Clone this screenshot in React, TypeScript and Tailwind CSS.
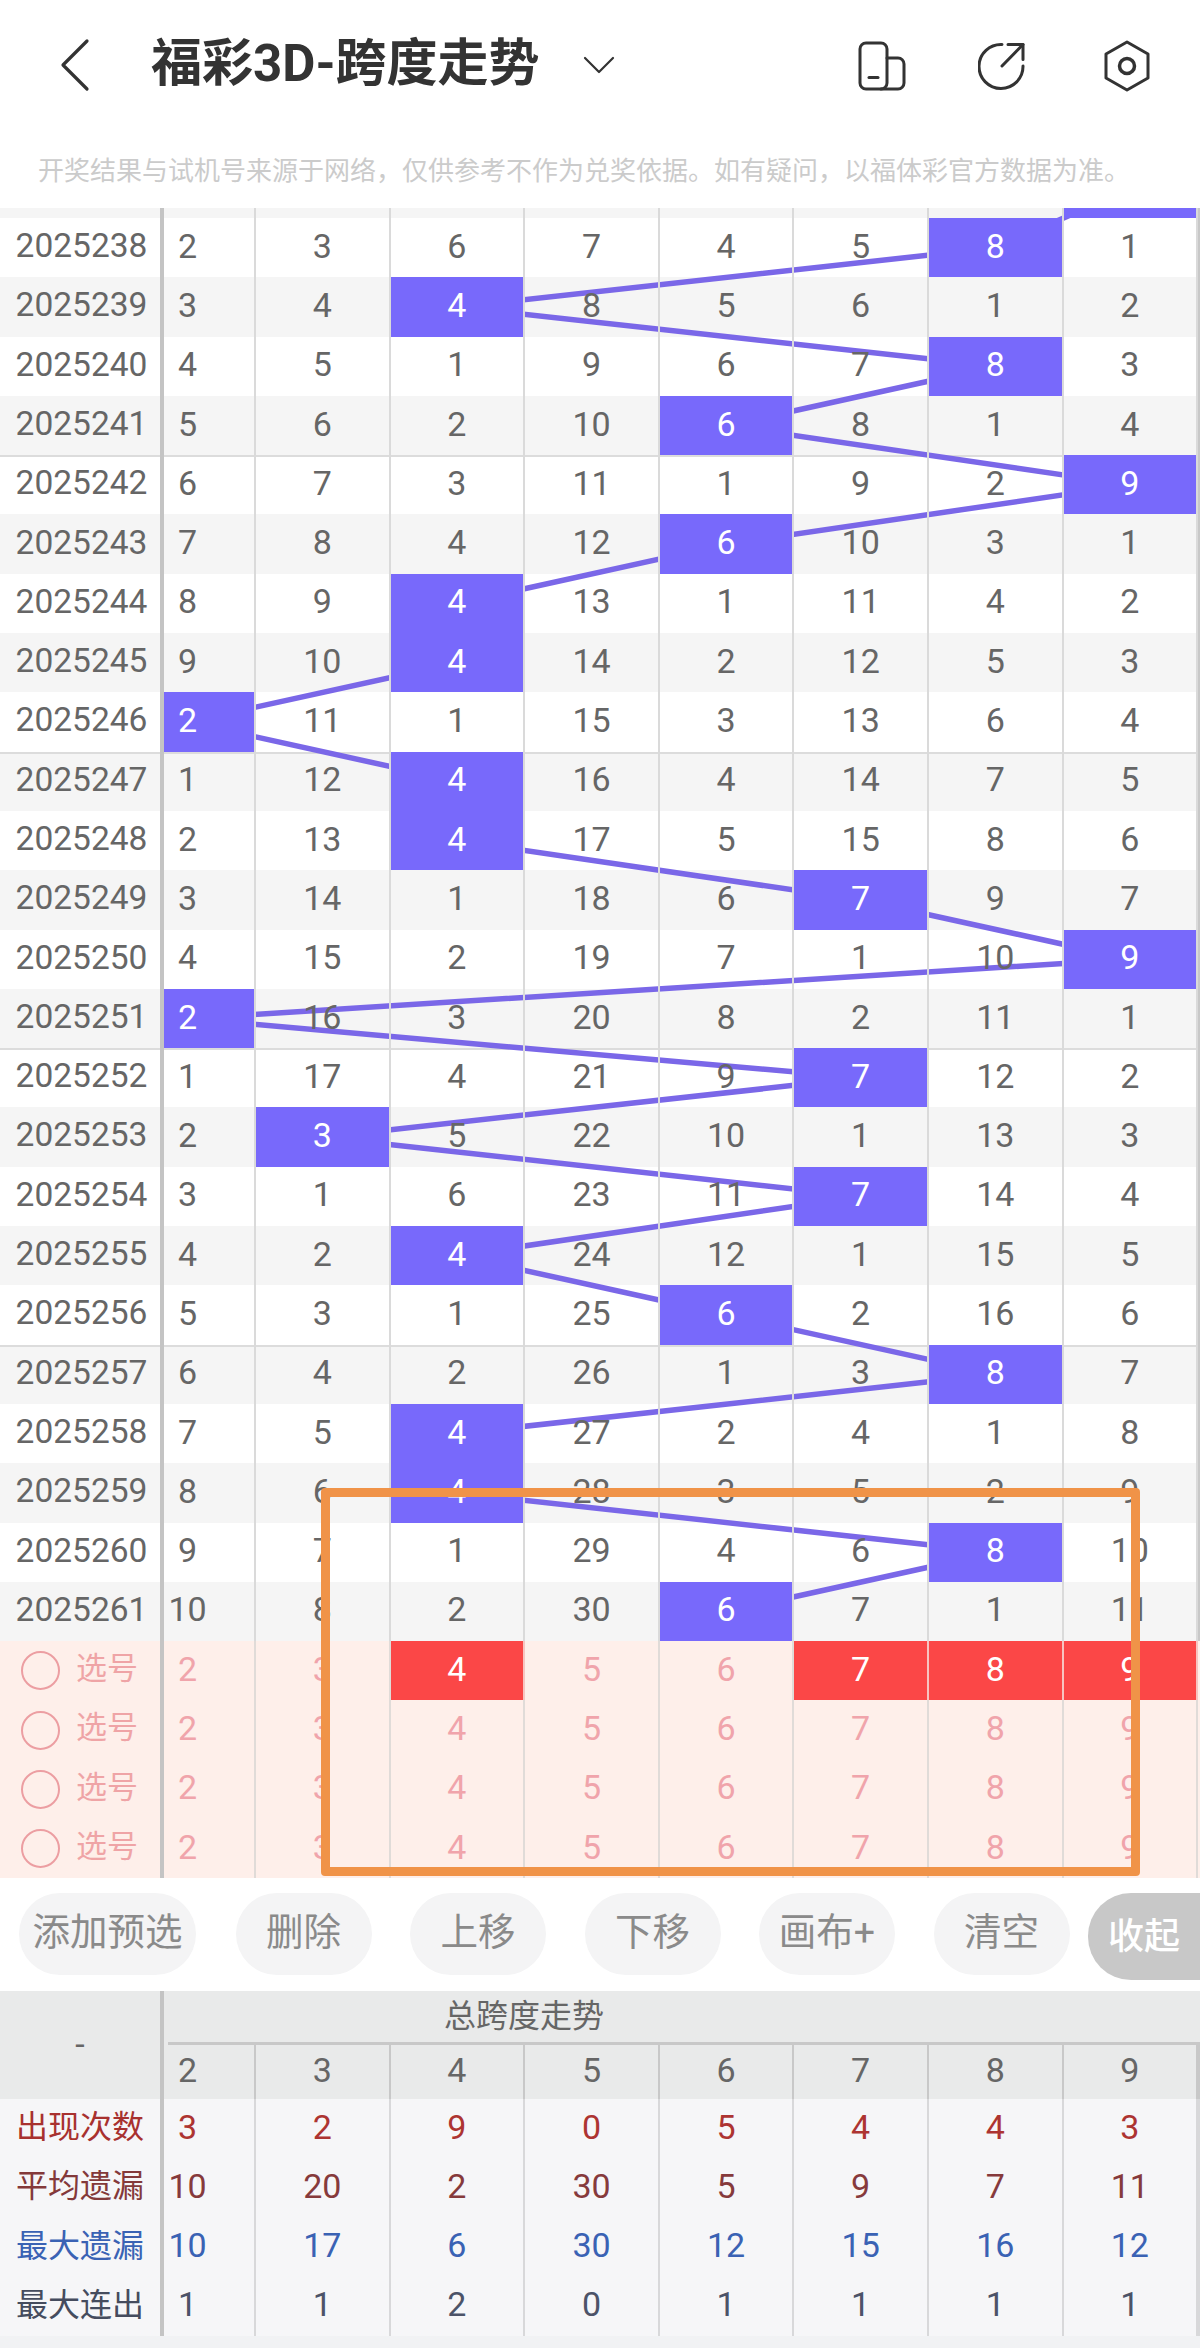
import React from 'react';

const CJK = "font-['Roboto','Noto_Sans_CJK_SC',sans-serif]";
const ROW_H = 59.3;
const GRID = 'grid grid-cols-[164px_92px_repeat(7,134.6px)_1fr]';
const STATS_GRID = 'grid grid-cols-[92px_repeat(7,134.6px)_1fr]';
const HEAD = [2, 3, 4, 5, 6, 7, 8, 9];

// [issue suffix, values, index of the column with the winning span]
const ROWS: [number, number[], number][] = [
  [2025238, [2, 3, 6, 7, 4, 5, 8, 1], 6],
  [2025239, [3, 4, 4, 8, 5, 6, 1, 2], 2],
  [2025240, [4, 5, 1, 9, 6, 7, 8, 3], 6],
  [2025241, [5, 6, 2, 10, 6, 8, 1, 4], 4],
  [2025242, [6, 7, 3, 11, 1, 9, 2, 9], 7],
  [2025243, [7, 8, 4, 12, 6, 10, 3, 1], 4],
  [2025244, [8, 9, 4, 13, 1, 11, 4, 2], 2],
  [2025245, [9, 10, 4, 14, 2, 12, 5, 3], 2],
  [2025246, [2, 11, 1, 15, 3, 13, 6, 4], 0],
  [2025247, [1, 12, 4, 16, 4, 14, 7, 5], 2],
  [2025248, [2, 13, 4, 17, 5, 15, 8, 6], 2],
  [2025249, [3, 14, 1, 18, 6, 7, 9, 7], 5],
  [2025250, [4, 15, 2, 19, 7, 1, 10, 9], 7],
  [2025251, [2, 16, 3, 20, 8, 2, 11, 1], 0],
  [2025252, [1, 17, 4, 21, 9, 7, 12, 2], 5],
  [2025253, [2, 3, 5, 22, 10, 1, 13, 3], 1],
  [2025254, [3, 1, 6, 23, 11, 7, 14, 4], 5],
  [2025255, [4, 2, 4, 24, 12, 1, 15, 5], 2],
  [2025256, [5, 3, 1, 25, 6, 2, 16, 6], 4],
  [2025257, [6, 4, 2, 26, 1, 3, 8, 7], 6],
  [2025258, [7, 5, 4, 27, 2, 4, 1, 8], 2],
  [2025259, [8, 6, 4, 28, 3, 5, 2, 9], 2],
  [2025260, [9, 7, 1, 29, 4, 6, 8, 10], 6],
  [2025261, [10, 8, 2, 30, 6, 7, 1, 11], 4],
];

const STATS: { label: string; labelClass: string; valueClass: string; values: number[] }[] = [
  { label: '出现次数', labelClass: 'text-[#a8312f]', valueClass: 'text-[#ad3432]', values: [3, 2, 9, 0, 5, 4, 4, 3] },
  { label: '平均遗漏', labelClass: 'text-[#84393a]', valueClass: 'text-[#863a3c]', values: [10, 20, 2, 30, 5, 9, 7, 11] },
  { label: '最大遗漏', labelClass: 'text-[#3a62b4]', valueClass: 'text-[#3a62b4]', values: [10, 17, 6, 30, 12, 15, 16, 12] },
  { label: '最大连出', labelClass: 'text-[#454c5e]', valueClass: 'text-[#4c5368]', values: [1, 1, 2, 0, 1, 1, 1, 1] },
];

const colX = (i: number) => (i === 0 ? 188 : 256 + 134.6 * (i - 1) + 67.3);
const rowY = (i: number) => 10 + (i + 0.5) * ROW_H;

function TrendLines() {
  const points = [[7, -1], ...ROWS.map((r, i) => [r[2], i])];
  return (
    <svg className="absolute left-0 top-0 z-10 h-[1433px] w-[1200px]" viewBox="0 0 1200 1433" fill="none">
      <polyline
        points={points.map(([c, r]) => `${colX(c)},${rowY(r)}`).join(' ')}
        stroke="#7a67e8"
        strokeWidth="5.5"
      />
    </svg>
  );
}

function NumberCell({ first, className, children }: { first?: boolean; className: string; children: React.ReactNode }) {
  return (
    <div className={`relative z-20 flex items-center justify-center border-r-2 pb-[3px] ${first ? 'pr-[43px]' : ''} ${className}`}>
      {children}
    </div>
  );
}

function TopBar() {
  return (
    <div className="flex h-[130px] items-center pl-[60px] pr-[48px]">
      <svg className="h-[54px] w-[30px]" viewBox="0 0 30 54" fill="none" stroke="#333" strokeWidth="3.2" strokeLinecap="round" strokeLinejoin="round">
        <path d="M27 3 3 27l24 24" />
      </svg>
      <h1 className="mb-[4px] ml-[61px] text-[51px] font-bold leading-none text-[#333]">福彩3D-跨度走势</h1>
      <svg className="ml-[43px] h-[20px] w-[32px]" viewBox="0 0 32 20" fill="none" stroke="#333" strokeWidth="2.2" strokeLinecap="round" strokeLinejoin="round">
        <path d="M2 3l14 14L30 3" />
      </svg>
      <svg className="ml-auto mt-[1px] h-[50px] w-[50px]" viewBox="0 0 50 50" fill="none" stroke="#333" strokeWidth="3" strokeLinecap="round" strokeLinejoin="round">
        <path d="M8 2h15a6 6 0 0 1 6 6v34a6 6 0 0 1-6 6H8a6 6 0 0 1-6-6V8a6 6 0 0 1 6-6Z" />
        <path d="M29 17h11a6 6 0 0 1 6 6v19a6 6 0 0 1-6 6H23" />
        <path d="M11 36.500h9" />
      </svg>
      <svg className="ml-[70px] mt-[1px] h-[50px] w-[50px]" viewBox="0 0 50 50" fill="none" stroke="#333" strokeWidth="3" strokeLinecap="round" strokeLinejoin="round">
        <path d="M24 3.500A22 22 0 1 0 45 25" />
        <path d="M24 25 45 3.500" />
        <path d="M30 3.500h15v15" />
      </svg>
      <svg className="ml-[74px] mt-[1px] h-[54px] w-[50px]" viewBox="0 0 50 54" fill="none" stroke="#333" strokeWidth="3" strokeLinecap="round" strokeLinejoin="round">
        <path d="M25 3 46 15v24L25 51 4 39V15Z" />
        <circle cx="25" cy="27" r="7.500" strokeWidth="3.500" />
      </svg>
    </div>
  );
}

function ChartRow({ issue, values, hit, index }: { issue: number; values: number[]; hit: number; index: number }) {
  const stripe = index % 2 === 1 ? 'bg-[#f5f5f5]' : 'bg-white';
  const rule = index % 5 === 4 ? 'shadow-[inset_0_2px_0_#dcdcdc]' : '';
  return (
    <div className={`${GRID} h-[59.3px] text-[#666] ${stripe} ${rule}`}>
      <div className="relative z-20 flex items-center justify-center border-r-[4px] border-[#c4c4c4] pb-[3px] pl-[3px] text-[33.500px]">{issue}</div>
      {values.map((v, i) => (
        <NumberCell key={i} first={i === 0} className={i === hit ? 'border-[#dadada] bg-[#7869fb] text-white' : 'border-[#dadada]'}>
          {v}
        </NumberCell>
      ))}
      <div className="bg-[#c8c8c8]" />
    </div>
  );
}

function PickRow({ active }: { active: boolean }) {
  const on = (v: number) => active && [4, 7, 8, 9].includes(v);
  return (
    <div className={`${GRID} h-[59.3px] bg-[#feefea] text-[#f0a4ab]`}>
      <div className="flex items-center gap-[16px] border-r-[4px] border-[#c4c4c4] pl-[21px]">
        <span className="h-[39px] w-[39px] rounded-full border-2 border-[#ec9ea2]" />
        <span className="mb-[3px] text-[31px] text-[#efa4a6]">选号</span>
      </div>
      {HEAD.map((v, i) => (
        <NumberCell key={v} first={i === 0} className={on(v) ? 'border-[#f7c4c0] bg-[#fb4747] text-white' : 'border-[#e0dbd8]'}>
          {v}
        </NumberCell>
      ))}
      <div className="bg-[#feefea]" />
    </div>
  );
}

function Toolbar() {
  const items: [string, string][] = [
    ['添加预选', 'mr-[1px] w-[177px]'],
    ['删除', 'w-[136px]'],
    ['上移', 'w-[136px]'],
    ['下移', 'w-[136px]'],
    ['画布+', 'w-[136px]'],
    ['清空', 'w-[136px]'],
  ];
  return (
    <div className="flex h-[112.6px] items-start gap-[38.500px] overflow-hidden bg-white pl-[19px] pt-[15px]">
      {items.map(([label, width]) => (
        <div key={label} className={`flex h-[82px] shrink-0 items-center justify-center rounded-[41px] bg-[#f4f4f5] pb-[4px] text-[37.500px] text-[#8a8a8a] ${width}`}>
          {label}
        </div>
      ))}
      <div className="ml-[-20px] flex h-[87px] w-[130px] shrink-0 items-center rounded-l-[43px] bg-[#c8c8c8] pl-[20px] text-[36px] font-medium text-white">
        收起
      </div>
    </div>
  );
}

function StatsPanel() {
  return (
    <div>
      <div className="flex h-[108px] bg-[#e9eaea]">
        <div className="flex w-[164px] shrink-0 items-center justify-center border-r-[4px] border-[#c4c4c4] text-[#666]">-</div>
        <div className="flex min-w-0 flex-1 flex-col">
          <div className="ml-[4px] flex h-[54px] items-center border-b-[3px] border-[#c8c8c8] pl-[276px] text-[32px] text-[#666]">总跨度走势</div>
          <div className={`${STATS_GRID} h-[54px] text-[#666]`}>
            {HEAD.map((v, i) => (
              <NumberCell key={v} first={i === 0} className="border-[#c8c8c8]">
                {v}
              </NumberCell>
            ))}
            <div className="bg-[#c8c8c8]" />
          </div>
        </div>
      </div>
      {STATS.map((s) => (
        <div key={s.label} className={`${GRID} h-[59.3px] bg-[#f6f6f8]`}>
          <div className={`flex items-center justify-center border-r-[4px] border-[#c4c4c4] pb-[3px] text-[32px] ${s.labelClass}`}>{s.label}</div>
          {s.values.map((v, i) => (
            <NumberCell key={i} first={i === 0} className={`border-[#d8d8da] ${s.valueClass}`}>
              {v}
            </NumberCell>
          ))}
          <div className="bg-[#d8d8da]" />
        </div>
      ))}
      <div className="h-[12px] bg-[#f1f2f4]" />
    </div>
  );
}

export default function App() {
  return (
    <div className={`relative h-[2348px] w-[1200px] overflow-hidden bg-white text-[34px] ${CJK}`}>
      <TopBar />
      <div className="flex h-[78px] items-start pl-[38px] pt-[26px] text-[26px] leading-[30px] text-[#cbcbcb]">
        开奖结果与试机号来源于网络，仅供参考不作为兑奖依据。如有疑问，以福体彩官方数据为准。
      </div>

      <div className="relative">
        <TrendLines />
        {/* tail of the row scrolled off above */}
        <div className={`${GRID} h-[10px] bg-[#f5f5f5]`}>
          <div className="border-r-[4px] border-[#c4c4c4]" />
          {HEAD.map((v, i) => (
            <div key={v} className={`relative z-20 border-r-2 border-[#dadada] ${i === 7 ? 'bg-[#7869fb]' : ''}`} />
          ))}
          <div className="bg-[#c8c8c8]" />
        </div>
        {ROWS.map(([issue, values, hit], i) => (
          <ChartRow key={issue} issue={issue} values={values} hit={hit} index={i} />
        ))}
      </div>

      {[0, 1, 2, 3].map((i) => (
        <PickRow key={i} active={i === 0} />
      ))}

      <Toolbar />
      <StatsPanel />

      {/* hand-drawn annotation on top of the screenshot */}
      <div className="absolute left-[321px] top-[1488px] z-30 h-[388px] w-[819px] rounded-[4px] border-[9px] border-[#f09348]" />
    </div>
  );
}
